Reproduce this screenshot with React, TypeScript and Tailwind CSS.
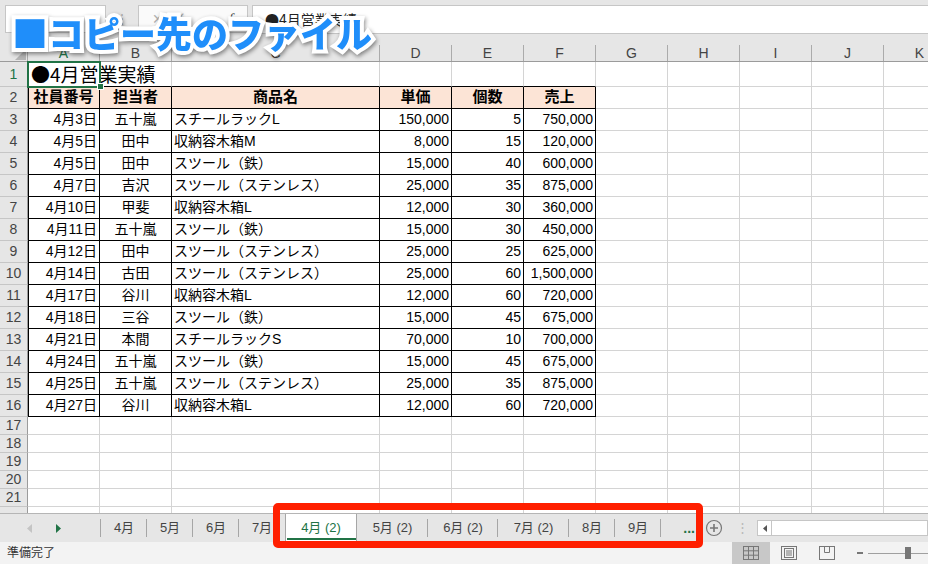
import React from "react"

const W = [
  "w-[72px]", "w-[72px]", "w-[208px]", "w-[72px]", "w-[72px]", "w-[72px]",
  "w-[72px]", "w-[72px]", "w-[72px]", "w-[72px]", "w-[72px]",
]
const LETTERS = ["A", "B", "C", "D", "E", "F", "G", "H", "I", "J", "K"]

const rows: string[][] = [
  ["4月3日", "五十嵐", "スチールラックL", "150,000", "5", "750,000"],
  ["4月5日", "田中", "収納容木箱M", "8,000", "15", "120,000"],
  ["4月5日", "田中", "スツール（鉄）", "15,000", "40", "600,000"],
  ["4月7日", "吉沢", "スツール（ステンレス）", "25,000", "35", "875,000"],
  ["4月10日", "甲斐", "収納容木箱L", "12,000", "30", "360,000"],
  ["4月11日", "五十嵐", "スツール（鉄）", "15,000", "30", "450,000"],
  ["4月12日", "田中", "スツール（ステンレス）", "25,000", "25", "625,000"],
  ["4月14日", "古田", "スツール（ステンレス）", "25,000", "60", "1,500,000"],
  ["4月17日", "谷川", "収納容木箱L", "12,000", "60", "720,000"],
  ["4月18日", "三谷", "スツール（鉄）", "15,000", "45", "675,000"],
  ["4月21日", "本間", "スチールラックS", "70,000", "10", "700,000"],
  ["4月24日", "五十嵐", "スツール（鉄）", "15,000", "45", "675,000"],
  ["4月25日", "五十嵐", "スツール（ステンレス）", "25,000", "35", "875,000"],
  ["4月27日", "谷川", "収納容木箱L", "12,000", "60", "720,000"],
]

const heads = ["社員番号", "担当者", "商品名", "単価", "個数", "売上"]

function RowHead({ n, h, active }: { n: number; h: string; active?: boolean }) {
  return (
    <div className={`${h} w-[28px] shrink-0 flex items-center justify-center bg-[#e6e6e6] border-r border-b border-r-[#9b9b9b] border-b-[#c6c6c6] text-[14px] ${active ? "text-[#217346]" : "text-[#444]"}`}>
      {n}
    </div>
  )
}

function Empty({ i, h }: { i: number; h: string }) {
  return <div className={`${W[i]} ${h} shrink-0 border-r border-b border-[#d4d4d4]`} />
}

function EmptyRow({ n, h }: { n: number; h: string }) {
  return (
    <div className={`flex ${h} overflow-hidden`}>
      <RowHead n={n} h={h} />
      {W.map((_, i) => <Empty key={i} i={i} h={h} />)}
    </div>
  )
}

function DataRow({ n, r }: { n: number; r: string[] }) {
  const align = ["justify-end pr-[2px]", "justify-center", "justify-start pl-[2px]", "justify-end pr-[2px]", "justify-end pr-[2px]", "justify-end pr-[2px]"]
  return (
    <div className="flex h-[22px]">
      <RowHead n={n} h="h-[22px]" />
      {r.map((t, i) => (
        <div key={i}
          className={`${W[i]} h-[22px] shrink-0 flex items-center whitespace-nowrap overflow-hidden border-r border-b border-black text-[14px] text-black ${align[i]} ${i === 0 ? "shadow-[inset_1px_0_0_#000]" : ""}`}>
          {t}
        </div>
      ))}
      {W.slice(6).map((_, i) => <Empty key={i} i={i + 6} h="h-[22px]" />)}
    </div>
  )
}

function Tab({ label, w, active }: { label: string; w: string; active?: boolean }) {
  if (active) {
    return (
      <div className={`${w} shrink-0 relative flex items-center justify-center bg-white border-x border-[#a6a6a6] text-[13px] text-[#217346]`}>
        {label}
        <div className="absolute left-[1px] right-0 bottom-[2px] h-[2px] bg-[#217346]" />
      </div>
    )
  }
  return (
    <div className={`${w} shrink-0 flex items-center justify-center text-[13px] text-[#444]`}>
      <span>{label}</span>
    </div>
  )
}

function Sep() {
  return <div className="w-px h-[18px] self-center bg-[#a6a6a6] shrink-0 -ml-px" />
}

export default function App() {
  return (
    <div className="relative w-[928px] h-[564px] overflow-hidden bg-white font-['Liberation_Sans','Noto_Sans_CJK_JP',sans-serif]">
      {/* formula bar */}
      <div className="h-[34px] bg-[#e6e6e6] flex items-start pt-[5px]">
        <div className="ml-[5px] w-[101px] h-[28px] bg-white border border-[#c6c6c6]" />
        <div className="w-[32px] h-[28px] flex items-center justify-center text-[#aaa] text-[12px]">⋮</div>
        <div className="w-[110px] h-[28px] bg-[#fafafa] border border-[#c6c6c6] flex items-center text-[#b0b0b0]">
          <span className="ml-[13px] text-[14px]">✕</span>
          <span className="ml-[10px] text-[14px]">✓</span>
          <span className="ml-auto mr-[14px] text-[15px] italic text-[#444] font-['Liberation_Serif',serif]">f</span>
        </div>
        <div className="ml-[4px] flex-1 h-[29px] bg-white border-t border-l border-b border-[#c6c6c6] flex items-center pl-[12px] text-[14px] text-[#222] font-['Noto_Sans_CJK_JP',sans-serif]">
          ●4月営業実績
        </div>
      </div>

      {/* column header */}
      <div className="h-[28px] bg-[#e6e6e6] flex flex-col justify-end">
        <div className="flex h-[17px] border-b border-[#9b9b9b]">
          <div className="w-[28px] shrink-0 relative border-r border-[#ababab]">
            <svg width="28" height="16" className="absolute left-0 top-0">
              <polygon points="26,4 26,15 15,15" fill="#b4b4b4" />
            </svg>
          </div>
          {LETTERS.map((l, i) => (
            <div key={l}
              className={`${W[i]} shrink-0 flex items-center justify-center border-r border-[#ababab] text-[14px] leading-none ${i === 0 ? "text-[#217346]" : "text-[#444]"}`}>
              {l}
            </div>
          ))}
        </div>
      </div>

      {/* row 1 */}
      <div className="flex h-[25px]">
        <RowHead n={1} h="h-[25px]" active />
        <div className={`${W[0]} h-[25px] shrink-0 relative border-b border-black z-10`}>
          <div className="absolute left-[3px] top-0 h-[24px] flex items-center whitespace-nowrap text-[19px] text-black font-['Noto_Sans_CJK_JP',sans-serif]">
            ●4月営業実績
          </div>
          <div className="absolute left-[-1px] top-[-1px] w-[74px] h-[27px] border-2 border-[#217346]" />
          <div className="absolute left-[69px] top-[21px] w-[7px] h-[7px] bg-[#217346] border border-white" />
        </div>
        {[1, 2, 3, 4, 5].map(i => (
          <div key={i} className={`${W[i]} h-[25px] shrink-0 border-r border-b border-r-[#d4d4d4] border-b-black`} />
        ))}
        {[6, 7, 8, 9, 10].map(i => <Empty key={i} i={i} h="h-[25px]" />)}
      </div>

      {/* row 2 */}
      <div className="flex h-[22px]">
        <RowHead n={2} h="h-[22px]" />
        {heads.map((t, i) => (
          <div key={t}
            className={`${W[i]} h-[22px] shrink-0 flex items-center justify-center bg-[#fce4d6] border-r border-b border-black text-[15px] font-bold text-black ${i === 0 ? "shadow-[inset_1px_0_0_#000]" : ""}`}>
            {t}
          </div>
        ))}
        {[6, 7, 8, 9, 10].map(i => <Empty key={i} i={i} h="h-[22px]" />)}
      </div>

      {rows.map((r, i) => <DataRow key={i} n={i + 3} r={r} />)}

      {[17, 18, 19, 20, 21].map(n => <EmptyRow key={n} n={n} h="h-[18px]" />)}
      <div className="flex h-[6px] overflow-hidden">
        <div className="h-[6px] w-[28px] shrink-0 bg-[#e6e6e6] border-r border-[#9b9b9b]" />
        {W.map((w, i) => <div key={i} className={`${w} h-[6px] shrink-0 border-r border-[#d4d4d4]`} />)}
      </div>

      {/* sheet tabs */}
      <div className="h-[29px] bg-[#e6e6e6] border-t border-[#b5b5b5] flex items-stretch">
        <div className="w-[100px] shrink-0 flex items-center">
          <svg width="6" height="9" className="ml-[27px]"><polygon points="5,0 5,9 0,4.5" fill="#c4c4c4" /></svg>
          <svg width="6" height="9" className="ml-[23px]"><polygon points="0,0 0,9 5,4.5" fill="#217346" /></svg>
        </div>
        <div className="w-px h-[18px] self-center bg-[#a6a6a6] shrink-0" />
        <Tab label="4月" w="w-[46px]" /><Sep />
        <Tab label="5月" w="w-[46px]" /><Sep />
        <Tab label="6月" w="w-[46px]" /><Sep />
        <Tab label="7月" w="w-[46px]" />
        <Tab label="4月 (2)" w="w-[72px]" active />
        <Tab label="5月 (2)" w="w-[71px]" /><Sep />
        <Tab label="6月 (2)" w="w-[70px]" /><Sep />
        <Tab label="7月 (2)" w="w-[71px]" /><Sep />
        <Tab label="8月" w="w-[46px]" /><Sep />
        <Tab label="9月" w="w-[46px]" /><Sep />
        <div className="w-[40px] shrink-0 flex items-center justify-end pr-[6px] text-[14px] font-bold text-[#217346]">...</div>
        <div className="w-[26px] shrink-0 flex items-center justify-center">
          <svg width="18" height="18" viewBox="0 0 18 18">
            <circle cx="9" cy="9" r="7.5" fill="none" stroke="#777" strokeWidth="1.2" />
            <path d="M9 5v8M5 9h8" stroke="#777" strokeWidth="1.6" />
          </svg>
        </div>
        <div className="w-[30px] shrink-0 flex items-center justify-center text-[#b8b8b8] text-[13px]">⋮</div>
        <div className="flex-1 flex items-center">
          <div className="w-full h-[16px] bg-white border border-[#c6c6c6] flex items-center">
            <div className="w-[14px] h-full border-r border-[#c6c6c6] flex items-center justify-center">
              <svg width="4" height="7"><polygon points="4,0 4,7 0,3.5" fill="#555" /></svg>
            </div>
          </div>
        </div>
      </div>

      {/* status bar */}
      <div className="h-[22px] bg-[#f3f3f3] flex items-center">
        <span className="ml-[7px] text-[12px] text-[#333]">準備完了</span>
        <div className="ml-auto flex items-stretch h-full">
          <div className="w-[38px] bg-[#c8c8c8] flex items-center justify-center">
            <svg width="16" height="14" viewBox="0 0 16 14">
              <rect x="0.5" y="0.5" width="15" height="13" fill="none" stroke="#777" />
              <path d="M5.5 0.5v13M10.5 0.5v13M0.5 4.8h15M0.5 9.2h15" stroke="#777" />
            </svg>
          </div>
          <div className="w-[38px] flex items-center justify-center">
            <svg width="16" height="14" viewBox="0 0 16 14">
              <rect x="0.5" y="0.5" width="15" height="13" fill="none" stroke="#777" />
              <rect x="3.5" y="2.5" width="9" height="9" fill="none" stroke="#777" />
              <path d="M5 5h6M5 7h6M5 9h6" stroke="#777" />
            </svg>
          </div>
          <div className="w-[38px] flex items-center justify-center">
            <svg width="16" height="14" viewBox="0 0 16 14">
              <rect x="0.5" y="0.5" width="15" height="13" fill="none" stroke="#777" />
              <path d="M5.5 0.5v6h5v-6" fill="none" stroke="#777" />
            </svg>
          </div>
          <div className="w-[82px] relative flex items-center">
            <div className="ml-[11px] w-[6px] h-[2px] bg-[#777]" />
            <div className="ml-[5px] flex-1 h-px bg-[#a0a0a0]" />
            <div className="absolute left-[59px] top-[5px] w-[6px] h-[12px] bg-[#777]" />
          </div>
        </div>
      </div>

      {/* overlays */}
      <div className="absolute left-[273px] top-[503px] w-[430px] h-[45px] border-[7px] border-[#ff1f00] rounded-[5px]" />
      <div className="absolute left-[12px] top-[14px] whitespace-nowrap leading-none text-[36px] font-black text-[#1f8efa] font-['Noto_Sans_CJK_JP',sans-serif] [paint-order:stroke_fill] [-webkit-text-stroke:8px_white] [filter:drop-shadow(1px_2px_2px_rgba(0,0,0,0.45))]">
        ■コピー先のファイル
      </div>
    </div>
  )
}
